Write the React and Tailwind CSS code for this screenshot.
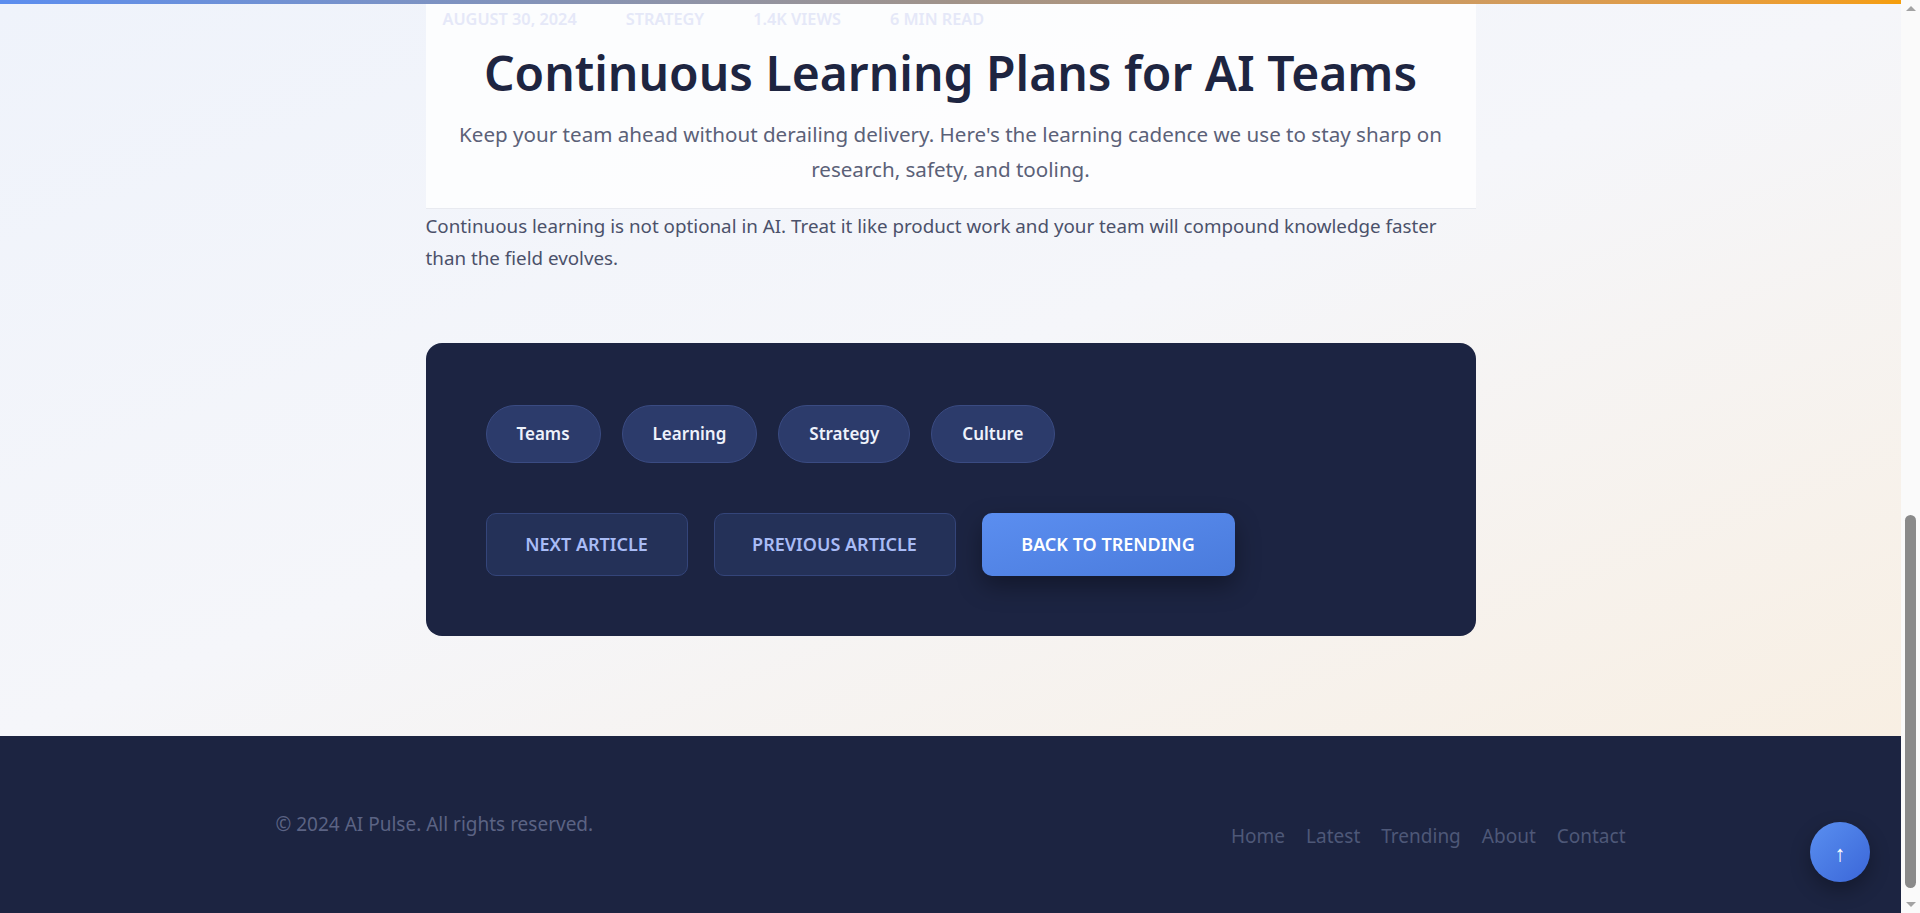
import { useState } from 'react'

const tags = ['Teams', 'Learning', 'Strategy', 'Culture']
const meta = ['August 30, 2024', 'Strategy', '1.4K views', '6 min read']
const footerLinks = ['Home', 'Latest', 'Trending', 'About', 'Contact']

function FakeScrollbar() {
  return (
    <div className="flex h-full w-[19px] shrink-0 flex-col items-center bg-[#fafafa]">
      <div className="flex h-[17px] w-full items-center justify-center">
        <div className="h-0 w-0 border-x-[5px] border-b-[5px] border-x-transparent border-b-[#a3a3a3]" />
      </div>
      <div className="flex w-full flex-1 flex-col items-center">
        <div className="mt-[498px] h-[373px] w-[11px] rounded-full bg-[#8a8a8a]" />
      </div>
      <div className="flex h-[17px] w-full items-center justify-center">
        <div className="h-0 w-0 border-x-[5px] border-t-[5px] border-x-transparent border-t-[#a3a3a3]" />
      </div>
    </div>
  )
}

export default function App() {
  const [active, setActive] = useState(null)

  return (
    <div className="flex h-[913px] w-full overflow-hidden font-['Noto_Sans','Open_Sans',sans-serif]">
      <div className="relative flex min-w-0 flex-1 flex-col">
        <div className="h-[4px] shrink-0 bg-gradient-to-r from-[#5b8def] via-[#a0938a] to-[#f59e0b]" />

        <main className="flex-1 bg-gradient-to-br from-[#eff3fb] via-[#f5f6fa] to-[#f8efe3]">
          <div className="mx-auto w-[1050px]">
            <header className="border-b border-[#e8eaf0] bg-white/80 px-[17px] pb-[21px] pt-[4px] text-center">
              <div className="flex h-[22px] items-center gap-[49px] text-[16.3px] font-semibold uppercase leading-[22px] text-[#e5e8f8]">
                {meta.map((m) => (
                  <span key={m}>{m}</span>
                ))}
              </div>
              <h1 className="mt-[13px] text-[48px] font-semibold leading-[60px] text-[#1e2541]">
                Continuous Learning Plans for AI Teams
              </h1>
              <p className="mx-auto mt-[14px] max-w-[1000px] text-[20.6px] leading-[35px] text-[#5b6178]">
                Keep your team ahead without derailing delivery. Here's the learning cadence we use to stay sharp on research, safety, and tooling.
              </p>
            </header>

            <p className="mt-[1px] text-[18.8px] leading-[32px] text-[#4b516a]">
              Continuous learning is not optional in AI. Treat it like product work and your team will compound knowledge faster than the field evolves.
            </p>

            <section className="mt-[69px] rounded-2xl bg-[#1c2442] px-[60px] pb-[60px] pt-[62px]">
              <div className="flex gap-[21px]">
                {tags.map((t) => (
                  <button
                    key={t}
                    onClick={() => setActive(t)}
                    className={`h-[58px] rounded-full border border-[#3a4b82] px-[30px] text-[17px] font-semibold text-[#eef2fb] ${
                      active === t ? 'bg-[#34467c]' : 'bg-[#2c3b6b]'
                    }`}
                  >
                    {t}
                  </button>
                ))}
              </div>
              <div className="mt-[50px] flex gap-[26px]">
                <button className="h-[63px] w-[202px] rounded-[10px] border border-[#34457a] bg-[#243158] text-[18px] font-semibold uppercase text-[#a9bcf6]">
                  Next Article
                </button>
                <button className="h-[63px] w-[242px] rounded-[10px] border border-[#34457a] bg-[#243158] text-[18px] font-semibold uppercase text-[#a9bcf6]">
                  Previous Article
                </button>
                <button className="h-[63px] w-[253px] rounded-[10px] bg-gradient-to-br from-[#5b8ef0] to-[#4a7bdc] text-[18px] font-semibold uppercase text-white shadow-[0_10px_25px_rgba(0,0,0,0.35)]">
                  Back to Trending
                </button>
              </div>
            </section>
          </div>
        </main>

        <footer className="h-[177px] shrink-0 bg-[#1c2441]">
          <div className="mx-auto flex w-[1350px] items-start justify-between pt-[74px]">
            <p className="text-[19px] leading-[28px] text-[#5b6384]">
              © 2024 AI Pulse. All rights reserved.
            </p>
            <nav className="mt-[12px] flex gap-[21px] text-[19px] leading-[28px] text-[#4e5878]">
              {footerLinks.map((l) => (
                <a key={l} href="#">
                  {l}
                </a>
              ))}
            </nav>
          </div>
        </footer>

        <button className="absolute bottom-[31px] right-[31px] flex h-[60px] w-[60px] items-center justify-center rounded-full bg-gradient-to-br from-[#5a8ff0] to-[#3b66d8] text-[22px] text-white shadow-[0_8px_20px_rgba(0,0,0,0.3)]">
          ↑
        </button>
      </div>
      <FakeScrollbar />
    </div>
  )
}
